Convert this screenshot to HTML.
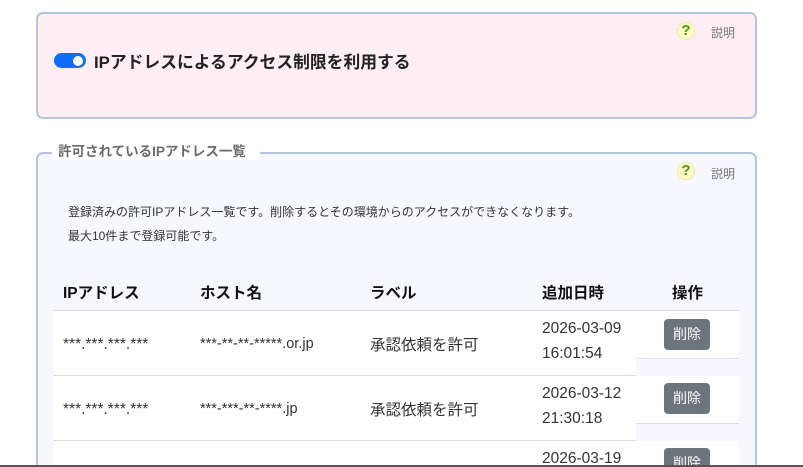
<!DOCTYPE html>
<html style="width:803px;height:467px;overflow:hidden"><head><meta charset="utf-8"><style>
*{margin:0;padding:0;box-sizing:border-box}
body{width:803px;height:467px;background:#fff;position:relative;overflow:hidden;font-family:"Liberation Sans","Noto Sans CJK JP",sans-serif;color:#222}
.a{position:absolute;white-space:nowrap}
.box1{left:36px;top:12px;width:721px;height:107px;background:#ffeff4;border:2px solid #b4c6de;border-radius:7px}
.box2{left:36px;top:152px;width:721px;height:330px;background:#f7f8fd;border:2px solid #b4c6de;border-radius:7px}
.q{width:18px;height:18px;border-radius:50%;background:#fffbc4;border:1px solid #f3e9a8;color:#3c9a1e;font-weight:bold;font-size:15px;line-height:16px;text-align:center}
.help{font-size:12px;color:#777}
.th{font-size:15.5px;font-weight:bold;top:281px;color:#111}
.w{background:#fff}
.line{height:1px;background:#dcdde2}
.td{font-size:15.5px;color:#333}
.ip{font-size:15.5px;color:#333}
.btn{width:46px;height:31px;background:#6c757d;color:#fff;border-radius:4px;font-size:14px;text-align:center;line-height:31px}
</style></head><body>
<div class="a box1"></div>
<div class="a q" style="left:677px;top:22px">?</div>
<div class="a help" style="left:711px;top:24px">説明</div>
<div class="a" style="left:54px;top:53px;width:32px;height:15px;border-radius:8px;background:#0d6efd"></div>
<div class="a" style="left:73px;top:56px;width:10px;height:10px;border-radius:50%;background:#fff"></div>
<div class="a" style="left:94px;top:49px;font-size:16.8px;font-weight:bold;color:#222">IPアドレスによるアクセス制限を利用する</div>

<div class="a box2"></div>
<div class="a" style="left:52px;top:140px;width:208px;height:20px;background:#fff"></div>
<div class="a" style="left:58px;top:140px;font-size:13.5px;font-weight:bold;color:#6b6b6b">許可されているIPアドレス一覧</div>
<div class="a q" style="left:677px;top:162px">?</div>
<div class="a help" style="left:711px;top:165px">説明</div>
<div class="a" style="left:68px;top:203px;font-size:12px;color:#333">登録済みの許可IPアドレス一覧です。削除するとその環境からのアクセスができなくなります。</div>
<div class="a" style="left:68px;top:227px;font-size:12px;color:#333">最大10件まで登録可能です。</div>

<div class="a th" style="left:63px">IPアドレス</div>
<div class="a th" style="left:200px">ホスト名</div>
<div class="a th" style="left:370px">ラベル</div>
<div class="a th" style="left:542px">追加日時</div>
<div class="a th" style="left:672px">操作</div>

<div class="a line" style="left:54px;top:310px;width:685px"></div>
<div class="a w" style="left:54px;top:311px;width:582px;height:64px"></div>
<div class="a w" style="left:636px;top:311px;width:103px;height:47px"></div>
<div class="a line" style="left:636px;top:358px;width:103px"></div>
<div class="a line" style="left:54px;top:375px;width:582px"></div>
<div class="a w" style="left:54px;top:376px;width:582px;height:64px"></div>
<div class="a w" style="left:636px;top:376px;width:103px;height:47px"></div>
<div class="a line" style="left:636px;top:423px;width:103px"></div>
<div class="a line" style="left:54px;top:440px;width:582px"></div>
<div class="a w" style="left:54px;top:441px;width:685px;height:30px"></div>

<div class="a ip" style="left:63px;top:336px">***.***.***.***</div>
<div class="a ip" style="left:200px;top:336px;font-size:14.5px">***-**-**-*****.or.jp</div>
<div class="a td" style="left:370px;top:333px">承認依頼を許可</div>
<div class="a td" style="left:542px;top:320px">2026-03-09</div>
<div class="a td" style="left:542px;top:345px">16:01:54</div>
<div class="a btn" style="left:664px;top:319px">削除</div>

<div class="a ip" style="left:63px;top:401px">***.***.***.***</div>
<div class="a ip" style="left:200px;top:401px;font-size:14.5px">***-***-**-****.jp</div>
<div class="a td" style="left:370px;top:398px">承認依頼を許可</div>
<div class="a td" style="left:542px;top:385px">2026-03-12</div>
<div class="a td" style="left:542px;top:410px">21:30:18</div>
<div class="a btn" style="left:664px;top:383px">削除</div>

<div class="a td" style="left:542px;top:450px">2026-03-19</div>
<div class="a btn" style="left:664px;top:448px">削除</div>
<div class="a" style="left:0;top:465px;width:803px;height:2px;background:#555"></div>
</body></html>
